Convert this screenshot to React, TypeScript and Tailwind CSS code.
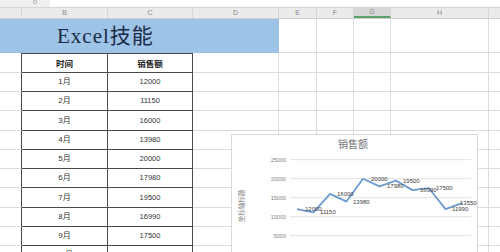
import React from "react";

const COLS = [22, 86, 85, 86, 38, 37, 37, 98];
const LETTERS = ["", "B", "C", "D", "E", "F", "G", "H"];
const LIGHT = "border-[#dcdcdc]";

const rows = [
  ["1月", "12000"],
  ["2月", "11150"],
  ["3月", "16000"],
  ["4月", "13980"],
  ["5月", "20000"],
  ["6月", "17980"],
  ["7月", "19500"],
  ["8月", "16990"],
  ["9月", "17500"],
  ["10月", "11990"],
];
const rowH = [19, 19, 20, 19, 19, 19, 20, 19, 19, 19];

const values = [12000, 11150, 16000, 13980, 20000, 17980, 19500, 16990, 17500, 11990, 13550];
const labelX = [305, 320, 337, 353, 371, 387, 403, 420, 436, 452, 460];
const px = (i: number) => 297 + i * 16.5;
const py = (v: number) => 254.7 - v * 0.0038;

function LightCells({ from, h }: { from: number; h: number }) {
  return (
    <>
      {COLS.slice(from).map((w, i) => (
        <div key={i} className={`shrink-0 border-r border-b ${LIGHT}`} style={{ width: w, height: h }} />
      ))}
      <div className={`flex-1 border-b ${LIGHT}`} style={{ height: h }} />
    </>
  );
}

export default function App() {
  return (
    <div className="relative w-[500px] h-[252px] overflow-hidden bg-white" style={{ fontFamily: '"Liberation Sans", "Noto Sans CJK SC", sans-serif' }}>
      {/* top strip */}
      <div className="flex h-[8px] border-b border-[#d4d4d4]">
        <div className="w-[50px] bg-[#efefef] relative">
          <div className="absolute left-[33px] top-0 w-[4px] h-[4px] border border-[#bbbbbb] rounded-[1px]" />
        </div>
        <div className="flex-1 bg-white" />
      </div>
      {/* column header */}
      <div className="flex h-[11px] bg-[#ebebeb] border-b border-[#cfcfcf]">
        {COLS.map((w, i) => (
          <div
            key={i}
            className={`shrink-0 flex items-center justify-center text-[7px] text-[#8a8a8a] border-r border-[#d6d6d6] ${i === 6 ? "bg-[#d7d7d7] border-b-2 border-b-[#5aa06a]" : ""}`}
            style={{ width: w }}
          >
            {LETTERS[i]}
          </div>
        ))}
        <div className="flex-1" />
      </div>
      {/* title row */}
      <div className="flex h-[34px]">
        <div className="w-[279px] shrink-0 bg-[#9dc3e6] flex items-center pl-[57px]">
          <span className="text-[21px] leading-none text-[#1c2a48] tracking-[1px]" style={{ fontFamily: '"Liberation Serif", "Noto Sans CJK SC", serif' }}>
            Excel技能
          </span>
        </div>
        <LightCells from={4} h={34} />
      </div>
      {/* table header */}
      <div className="flex h-[20px]">
        <div className={`w-[22px] shrink-0 border-r border-r-[#4a4a4a] border-b ${LIGHT}`} />
        <div className="w-[86px] shrink-0 border-t border-r border-b border-[#4a4a4a] flex items-center justify-center text-[8.5px] font-bold text-[#222]" style={{ fontFamily: '"Noto Sans CJK SC", sans-serif' }}>
          时间
        </div>
        <div className="w-[85px] shrink-0 border-t border-r border-b border-[#4a4a4a] flex items-center justify-center text-[8.5px] font-bold text-[#222]" style={{ fontFamily: '"Noto Sans CJK SC", sans-serif' }}>
          销售额
        </div>
        <LightCells from={3} h={20} />
      </div>
      {rows.map(([m, v], r) => (
        <div key={r} className="flex" style={{ height: rowH[r] }}>
          <div className={`w-[22px] shrink-0 border-r border-r-[#4a4a4a] border-b ${LIGHT}`} />
          <div className="w-[86px] shrink-0 border-r border-b border-[#4a4a4a] flex items-center justify-center text-[8px] text-[#333]" style={{ fontFamily: '"Liberation Sans", "Noto Sans CJK SC", sans-serif' }}>
            {m}
          </div>
          <div className="w-[85px] shrink-0 border-r border-b border-[#4a4a4a] flex items-center justify-center text-[7.5px] text-[#333]">
            {v}
          </div>
          <LightCells from={3} h={rowH[r]} />
        </div>
      ))}
      {/* chart */}
      <div className="absolute left-[231px] top-[134px] w-[247px] h-[140px] bg-white border border-[#d9d9d9]">
        <svg width="247" height="140" viewBox="231 134 247 140" className="absolute -left-px -top-px">
          <text x="353" y="148" textAnchor="middle" fontSize="10" fill="#737373" fontFamily='"Noto Sans CJK SC", sans-serif'>
            销售额
          </text>
          {[25000, 20000, 15000, 10000, 5000].map((v) => (
            <g key={v}>
              <line x1="290" x2="471" y1={py(v)} y2={py(v)} stroke="#d9d9d9" strokeWidth="0.8" />
              <text x="286" y={py(v) + 2} textAnchor="end" fontSize="5.5" fill="#808080" fontFamily='"Liberation Sans", sans-serif'>
                {v}
              </text>
            </g>
          ))}
          <text
            x="242"
            y="206"
            textAnchor="middle"
            fontSize="6.5"
            fill="#808080"
            fontFamily='"Noto Sans CJK SC", sans-serif'
            transform="rotate(-90 242 206)"
            dominantBaseline="middle"
          >
            坐标轴标题
          </text>
          <polyline
            points={values.map((v, i) => `${px(i)},${py(v)}`).join(" ")}
            fill="none"
            stroke="#6b9bd0"
            strokeWidth="1.8"
            strokeLinejoin="round"
          />
          {values.map((v, i) => (
            <text key={i} x={labelX[i]} y={py(v) + 2} fontSize="6" fill="#404040" fontFamily='"Liberation Sans", sans-serif'>
              {v}
            </text>
          ))}
        </svg>
      </div>
    </div>
  );
}
